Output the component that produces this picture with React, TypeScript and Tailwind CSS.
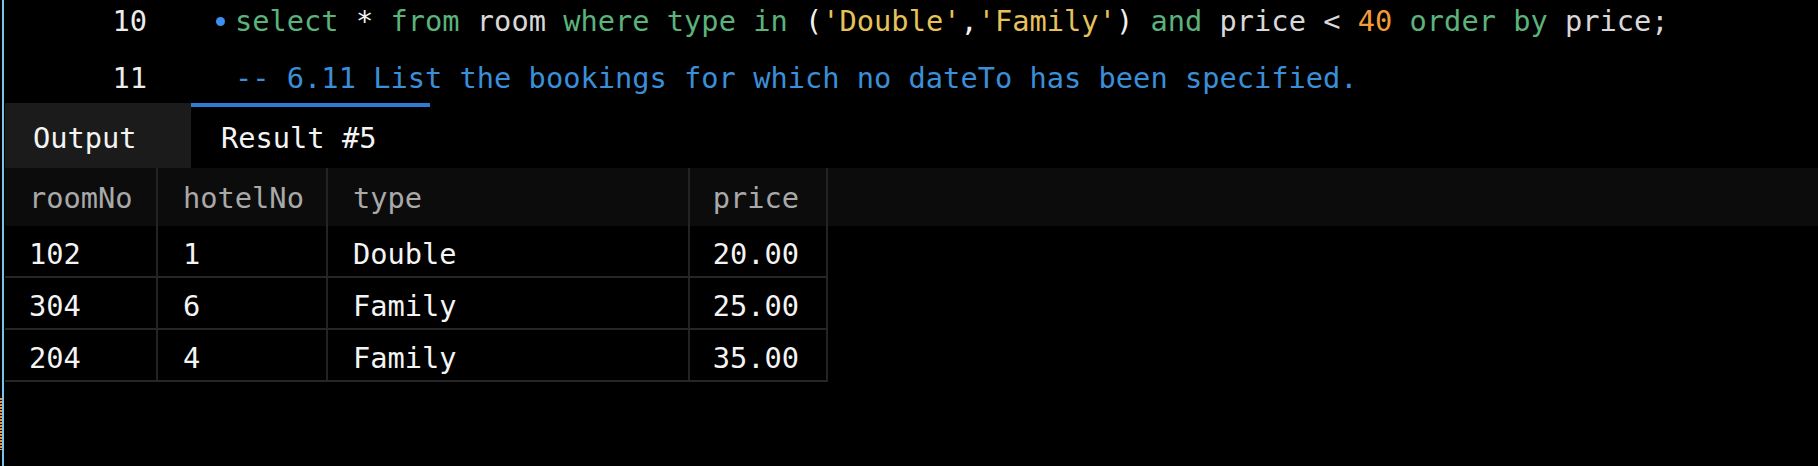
import React from "react";

type Tok = { t: string; c: string };

const KW = "text-[#5cb27b]";
const ID = "text-[#d8d8d8]";
const PUNC = "text-[#f2f2f2]";
const STR = "text-[#e6c25a]";
const NUM = "text-[#f29b3a]";

const line10: Tok[] = [
    { t: "select", c: KW },
    { t: " * ", c: PUNC },
    { t: "from", c: KW },
    { t: " room ", c: ID },
    { t: "where type in", c: KW },
    { t: " (", c: PUNC },
    { t: "'Double'", c: STR },
    { t: ",", c: PUNC },
    { t: "'Family'", c: STR },
    { t: ") ", c: PUNC },
    { t: "and", c: KW },
    { t: " price < ", c: ID },
    { t: "40", c: NUM },
    { t: " ", c: ID },
    { t: "order by", c: KW },
    { t: " price;", c: ID },
];

const rows = [
    ["102", "1", "Double", "20.00"],
    ["304", "6", "Family", "25.00"],
    ["204", "4", "Family", "35.00"],
];

const mono = "font-['DejaVu_Sans_Mono','Liberation_Mono',monospace]";

export default function App() {
    return (
        <div
            className={`relative flex w-[1818px] h-[466px] overflow-hidden bg-black ${mono} text-[28.7px]`}
        >
            {/* left gutter stripe */}
            <div className="w-[5px] shrink-0 flex">
                <div className="ml-[2px] w-[2px] h-full bg-[#7cc3ea]" />
            </div>
            {/* change marker */}
            <div className="absolute left-0 top-[398px] w-[2px] h-[52px] bg-[repeating-linear-gradient(to_bottom,#e8923a_0px,#e8923a_2px,transparent_2px,transparent_3px)]" />

            <div className="flex-1 flex flex-col">
                {/* Editor */}
                <div className="h-[103px] overflow-hidden -ml-[5px]">
                    <div className="-mt-[7px] flex flex-col whitespace-pre">
                        <div className="h-[57px] flex items-center">
                            <div className="w-[147px] text-right text-[#ececec]">10</div>
                            <div className="w-[88px] flex justify-end pr-[10px]">
                                <div className="w-[9px] h-[9px] rounded-full bg-[#3d8ff2]" />
                            </div>
                            <div>
                                {line10.map((tok, i) => (
                                    <span key={i} className={tok.c}>
                                        {tok.t}
                                    </span>
                                ))}
                            </div>
                        </div>
                        <div className="h-[57px] flex items-center">
                            <div className="w-[147px] text-right text-[#ececec]">11</div>
                            <div className="w-[88px]" />
                            <div className="text-[#3a8fd8]">
                                -- 6.11 List the bookings for which no dateTo has been specified.
                            </div>
                        </div>
                    </div>
                </div>

                {/* Tabs */}
                <div className="h-[65px] flex text-[#f4f4f4]">
                    <div className="w-[186px] bg-[#1b1b1b] pl-[28px] pt-[7px] flex items-center">
                        Output
                    </div>
                    <div className="w-[239px] border-t-4 border-[#2f7ad2] pl-[30px] pt-[3px] flex items-center">
                        Result #5
                    </div>
                </div>

                {/* Result grid */}
                <div className="bg-[#0c0c0c] h-[58px] flex text-[#a9a9a9]">
                    <div className="w-[153px] border-r-2 border-[#232323] pl-[24px] pt-[3px] flex items-center">roomNo</div>
                    <div className="w-[170px] border-r-2 border-[#232323] pl-[25px] pt-[3px] flex items-center">hotelNo</div>
                    <div className="w-[362px] border-r-2 border-[#232323] pl-[25px] pt-[3px] flex items-center">type</div>
                    <div className="w-[138px] border-r-2 border-[#232323] pr-[27px] pt-[3px] flex items-center justify-end">price</div>
                </div>
                <div className="w-[823px] text-[#f4f4f4]">
                    {rows.map((r, i) => (
                        <div key={i} className="h-[52px] flex border-b-2 border-[#262626]">
                            <div className="w-[153px] border-r-2 border-[#232323] pl-[24px] pt-[7px] flex items-center">{r[0]}</div>
                            <div className="w-[170px] border-r-2 border-[#232323] pl-[25px] pt-[7px] flex items-center">{r[1]}</div>
                            <div className="w-[362px] border-r-2 border-[#232323] pl-[25px] pt-[7px] flex items-center">{r[2]}</div>
                            <div className="w-[138px] border-r-2 border-[#232323] pr-[27px] pt-[7px] flex items-center justify-end">{r[3]}</div>
                        </div>
                    ))}
                </div>
            </div>
        </div>
    );
}
